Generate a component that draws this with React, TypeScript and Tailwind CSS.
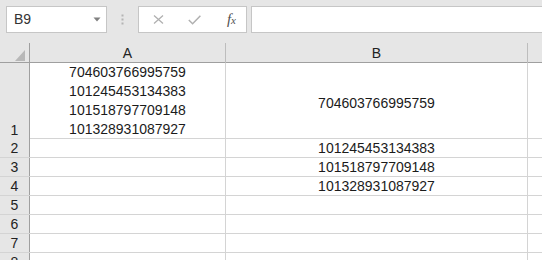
import React from 'react';

const rowsB = ['', '101245453134383', '101518797709148', '101328931087927', '', '', '', ''];

const App: React.FC = () => {
  return (
    <div className="w-[542px] h-[260px] overflow-hidden bg-white font-['Liberation_Sans',Arial,sans-serif] text-[14px] text-[#1b1b1b]">
      {/* formula bar */}
      <div className="h-[43px] bg-[#e6e6e6] flex items-start pt-[6px] pl-[6px]">
        <div className="w-[101px] h-[27px] bg-white border border-[#c6c6c6] flex items-center justify-between pl-[7px] pr-[5px]">
          <span className="text-[#333]">B9</span>
          <svg width="8" height="5" viewBox="0 0 8 5">
            <path d="M0.5 0.5 L7.5 0.5 L4 4.5 Z" fill="#808080" />
          </svg>
        </div>
        <div className="w-[31px] h-[27px] flex items-center justify-center">
          <svg width="3" height="11" viewBox="0 0 3 11">
            <rect x="0.5" y="0.5" width="2" height="2" fill="#b4b4b4" />
            <rect x="0.5" y="4.5" width="2" height="2" fill="#b4b4b4" />
            <rect x="0.5" y="8.5" width="2" height="2" fill="#b4b4b4" />
          </svg>
        </div>
        <div className="w-[109px] h-[27px] bg-white border border-[#c6c6c6] flex items-center">
          <div className="w-[25px] flex justify-end">
            <svg width="11" height="9" viewBox="0 0 11 9">
              <path d="M1 0.5 L10 8.5 M10 0.5 L1 8.5" stroke="#b0b0b0" strokeWidth="1.3" />
            </svg>
          </div>
          <div className="w-[37px] flex justify-end">
            <svg width="13" height="10" viewBox="0 0 13 10">
              <path d="M0.8 5 L4.6 8.8 L12.4 0.8" stroke="#b0b0b0" strokeWidth="1.5" fill="none" />
            </svg>
          </div>
          <div className="w-[35px] flex justify-end">
            <span className="font-['Liberation_Serif',serif] italic text-[15px] text-[#505050] leading-none">
              f<span className="text-[11px]">x</span>
            </span>
          </div>
        </div>
        <div className="ml-[4px] flex-1 h-[27px] bg-white border-y border-l border-[#c6c6c6]" />
      </div>

      {/* column headers */}
      <div className="grid grid-cols-[30px_196px_302px_1fr] h-[20px] bg-[#e6e6e6] border-b border-[#9f9f9f]">
        <div className="border-r border-[#9f9f9f] flex items-end justify-end pr-[4px] pb-[3px]">
          <svg width="10" height="11" viewBox="0 0 10 11">
            <path d="M10 0 L10 11 L0 11 Z" fill="#b8b8b8" />
          </svg>
        </div>
        <div className="border-r border-[#bdbdbd] flex items-center justify-center text-[#222]">A</div>
        <div className="border-r border-[#bdbdbd] flex items-center justify-center text-[#222]">B</div>
        <div />
      </div>

      {/* row 1 */}
      <div className="grid grid-cols-[30px_196px_302px_1fr] h-[76px] border-b border-[#d4d4d4]">
        <div className="bg-[#e6e6e6] border-r border-[#9f9f9f] flex items-end justify-center leading-[19px] text-[#222]">1</div>
        <div className="border-r border-[#d4d4d4] flex flex-col items-center justify-end leading-[19px] pb-[1px]">
          <span>704603766995759</span>
          <span>101245453134383</span>
          <span>101518797709148</span>
          <span>101328931087927</span>
        </div>
        <div className="border-r border-[#d4d4d4] flex items-center justify-center pt-[3px]">704603766995759</div>
        <div />
      </div>

      {rowsB.slice(1).map((val, i) => (
        <div key={i} className="grid grid-cols-[30px_196px_302px_1fr] h-[19px] border-b border-[#d4d4d4]">
          <div className="bg-[#e6e6e6] border-r border-[#9f9f9f] flex items-center justify-center leading-[18px] text-[#222]">
            {i + 2}
          </div>
          <div className="border-r border-[#d4d4d4]" />
          <div className="border-r border-[#d4d4d4] flex items-center justify-center leading-[18px]">{val}</div>
          <div />
        </div>
      ))}
    </div>
  );
};

export default App;
